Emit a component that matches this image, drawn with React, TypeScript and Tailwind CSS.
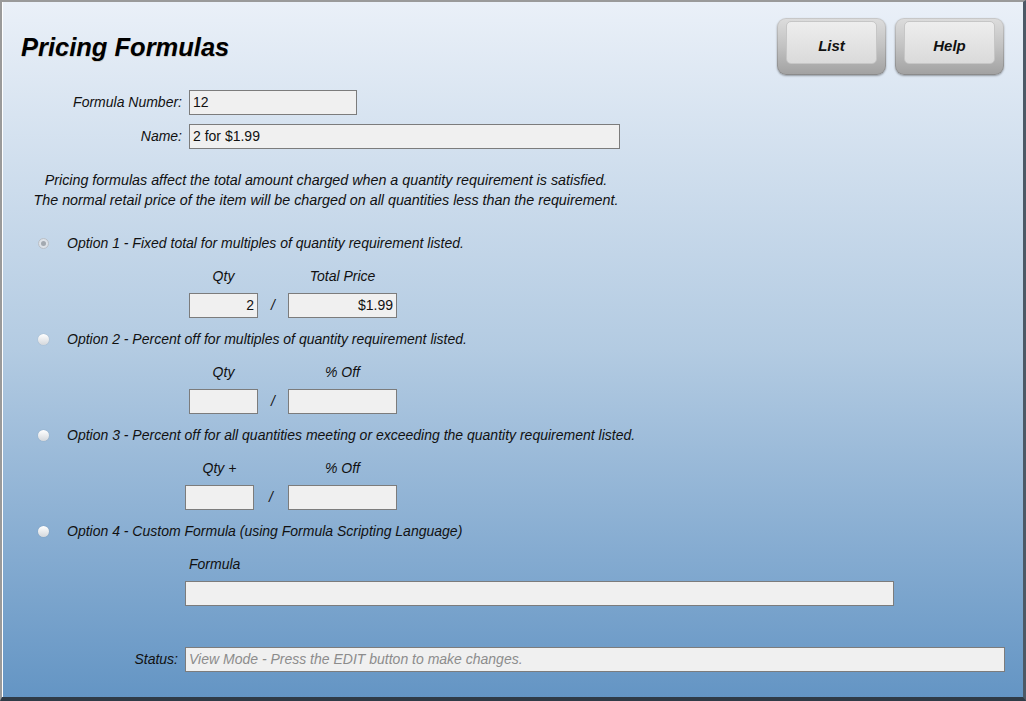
import type { ReactNode } from "react";

const font = "font-['Liberation_Sans',Arial,sans-serif]";

const KeyButton = ({ label }: { label: string }) => (
	<div className="w-[109px] h-[57px] rounded-[9px] bg-gradient-to-b from-[#c8c8c8] to-[#8a8a8a] p-[1px] shadow-[0_1px_2px_rgba(0,0,0,0.35)]">
		<div className="w-full h-full rounded-[8px] bg-gradient-to-b from-[#dcdcdc] via-[#c2c2c2] to-[#a2a2a2] px-[8px] pt-[2px] pb-[10px]">
			<div className="w-full h-full rounded-[5px] bg-gradient-to-b from-[#eeeeee] to-[#dadada] border border-[#c6c6c6] flex items-center justify-center pt-[8px]">
				<span className="text-[15px] font-bold italic text-[#111]">{label}</span>
			</div>
		</div>
	</div>
);

const Radio = ({ checked }: { checked?: boolean }) => (
	<span
		className={
			checked
				? "w-[11px] h-[11px] rounded-full border border-[#b9bfc6] bg-[#dde2e8] flex items-center justify-center"
				: "w-[11px] h-[11px] rounded-full bg-gradient-to-b from-[#ffffff] to-[#d4d8dc] shadow-[0_0_1px_rgba(0,0,0,0.25)]"
		}
	>
		{checked && <span className="w-[5px] h-[5px] rounded-full bg-[#a3a9b0]" />}
	</span>
);

const Box = ({ w, value, right, muted }: { w: string; value?: string; right?: boolean; muted?: boolean }) => (
	<div
		className={`${w} h-[25px] bg-[#f0f0f0] border border-[#7c7c7c] px-[3px] flex items-center text-[14px] ${right ? "justify-end" : ""} ${muted ? "italic text-[#8c8c8c]" : "text-[#111]"}`}
	>
		{value}
	</div>
);

const Option = ({ label, checked, children }: { label: string; checked?: boolean; children?: ReactNode }) => (
	<div>
		<div className="flex items-center h-[20px]">
			<div className="w-[64px] pl-[35px] flex items-center">
				<Radio checked={checked} />
			</div>
			<span className="italic text-[14px] text-[#111]">{label}</span>
		</div>
		{children}
	</div>
);

const PairRow = ({
	left,
	right,
	qty,
	total,
	shift,
}: {
	left: string;
	right: string;
	qty?: string;
	total?: string;
	shift?: boolean;
}) => (
	<div className="mt-[13px]">
		<div className="flex h-[20px] items-center italic text-[14px] text-[#111]">
			<div className={shift ? "ml-[182px] w-[69px] text-center" : "ml-[186px] w-[69px] text-center"}>{left}</div>
			<div className={shift ? "ml-[34px] w-[109px] text-center" : "ml-[30px] w-[109px] text-center"}>{right}</div>
		</div>
		<div className="flex items-center mt-[7px]">
			<div className={shift ? "ml-[182px]" : "ml-[186px]"}>
				<Box w="w-[69px]" value={qty} right />
			</div>
			<div className={shift ? "w-[34px] text-center italic text-[14px]" : "w-[30px] text-center italic text-[14px]"}>/</div>
			<Box w="w-[109px]" value={total} right />
		</div>
	</div>
);

export default function App() {
	return (
		<div className={`${font} w-[1026px] h-[701px] border-t-2 border-l-2 border-[#9a9a9a] border-r-[3px] border-r-[#4c5966] border-b-[4px] border-b-[#2f3b47] overflow-hidden`}>
			<div className="w-full h-full border-l border-white bg-gradient-to-b from-[#eaf0f8] via-[#b3cbe2] to-[#6495c4] text-[#111]">
				<div className="flex justify-between pt-[16px] pr-[19px]">
					<h1 className="ml-[18px] mt-[13px] text-[25.5px] leading-[32px] font-bold italic text-black [text-shadow:0.5px_0.5px_0_rgba(150,110,60,0.25)]">
						Pricing Formulas
					</h1>
					<div className="flex gap-[9px]">
						<KeyButton label="List" />
						<KeyButton label="Help" />
					</div>
				</div>

				<div className="mt-[15px] flex items-center">
					<div className="w-[186px] pr-[7px] text-right italic text-[14px]">Formula Number:</div>
					<Box w="w-[168px]" value="12" />
				</div>
				<div className="mt-[9px] flex items-center">
					<div className="w-[186px] pr-[7px] text-right italic text-[14px]">Name:</div>
					<Box w="w-[431px]" value="2 for $1.99" />
				</div>

				<div className="mt-[21px] w-[646px] text-center italic text-[14.3px] leading-[20px]">
					<p>Pricing formulas affect the total amount charged when a quantity requirement is satisfied.</p>
					<p>The normal retail price of the item will be charged on all quantities less than the requirement.</p>
				</div>

				<div className="mt-[23px]">
					<Option label="Option 1 - Fixed total for multiples of quantity requirement listed." checked>
						<PairRow left="Qty" right="Total Price" qty="2" total="$1.99" />
					</Option>
				</div>
				<div className="mt-[11px]">
					<Option label="Option 2 - Percent off for multiples of quantity requirement listed.">
						<PairRow left="Qty" right="% Off" />
					</Option>
				</div>
				<div className="mt-[11px]">
					<Option label="Option 3 - Percent off for all quantities meeting or exceeding the quantity requirement listed.">
						<PairRow left="Qty +" right="% Off" shift />
					</Option>
				</div>
				<div className="mt-[11px]">
					<Option label="Option 4 - Custom Formula (using Formula Scripting Language)">
						<div className="mt-[13px] ml-[186px] h-[20px] flex items-center italic text-[14px]">Formula</div>
						<div className="mt-[7px] ml-[182px]">
							<Box w="w-[709px]" />
						</div>
					</Option>
				</div>

				<div className="mt-[41px] flex items-center">
					<div className="w-[182px] pr-[7px] text-right italic text-[14px]">Status:</div>
					<Box w="w-[820px]" value="View Mode - Press the EDIT button to make changes." muted />
				</div>
			</div>
		</div>
	);
}
